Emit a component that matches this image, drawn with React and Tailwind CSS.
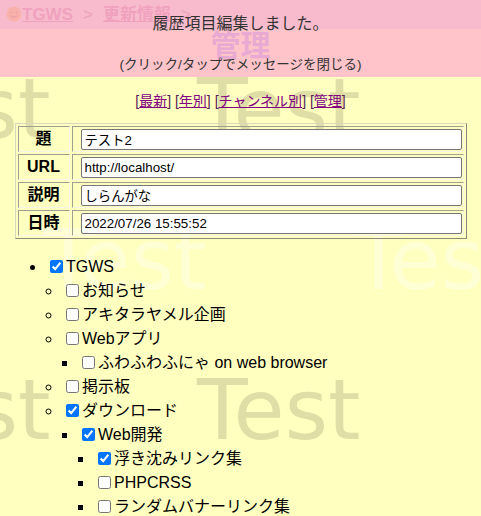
import React, { useState } from 'react';

const font = "font-['Liberation_Sans','Noto_Sans_CJK_JP',sans-serif]";

const tree = [
  {
    label: 'TGWS',
    checked: true,
    children: [
      { label: 'お知らせ' },
      { label: 'アキタラヤメル企画' },
      { label: 'Webアプリ', children: [{ label: 'ふわふわふにゃ on web browser' }] },
      { label: '掲示板' },
      {
        label: 'ダウンロード',
        checked: true,
        children: [
          {
            label: 'Web開発',
            checked: true,
            children: [
              { label: '浮き沈みリンク集', checked: true },
              { label: 'PHPCRSS' },
              { label: 'ランダムバナーリンク集' },
            ],
          },
        ],
      },
    ],
  },
];

const listStyles = ['list-disc pl-[46px]', 'list-[circle] pl-4', 'list-[square] pl-4', 'list-[square] pl-4'];

const Tree = ({ items, depth = 0 }) => (
  <ul className={listStyles[depth]}>
    {items.map((item) => (
      <li key={item.label} className="leading-6">
        <label className="block h-6 whitespace-nowrap">
          <input
            type="checkbox"
            defaultChecked={item.checked}
            className="ml-1 mr-[3px] w-[13px] h-[13px] align-[-1px]"
          />
          {item.label}
        </label>
        {item.children && <Tree items={item.children} depth={depth + 1} />}
      </li>
    ))}
  </ul>
);

const Face = () => (
  <svg width="16" height="16" viewBox="0 0 16 16" className="inline-block align-[-2px]">
    <circle cx="8" cy="8" r="7.5" fill="#e0a030" />
    <circle cx="5.5" cy="6.5" r="1" fill="#a05a10" />
    <circle cx="10.5" cy="6.5" r="1" fill="#a05a10" />
    <path d="M4.5 9.5 Q8 13 11.5 9.5" stroke="#a05a10" strokeWidth="1.2" fill="none" />
  </svg>
);

const fields = [
  { name: '題', value: 'テスト2' },
  { name: 'URL', value: 'http://localhost/' },
  { name: '説明', value: 'しらんがな' },
  { name: '日時', value: '2022/07/26 15:55:52' },
];

export default function App() {
  const [showMessage, setShowMessage] = useState(true);

  return (
    <div className={`relative min-h-[516px] overflow-hidden bg-[#ffffc0] text-black ${font}`}>
      {/* background watermark */}
      <div className="absolute inset-0 pointer-events-none font-['DejaVu_Sans',sans-serif] text-[83px] leading-none whitespace-nowrap">
        <span className="absolute left-[-113px] top-[68px] text-[#dfdea6]">Test</span>
        <span className="absolute left-[197px] top-[68px] text-[#dfdea6]">Test</span>
        <span className="absolute left-[43px] top-[219px] text-[#ffffd6]">Test</span>
        <span className="absolute left-[353px] top-[219px] text-[#ffffd6]">Test</span>
        <span className="absolute left-[-113px] top-[369px] text-[#dfdea6]">Test</span>
        <span className="absolute left-[197px] top-[369px] text-[#dfdea6]">Test</span>
      </div>

      <div className="relative">
        <div className="h-[29px] bg-[#dcd3d4] pl-[6px] flex items-center gap-[2px] text-[17px] font-bold">
          <a href="#" className="underline text-[#b0508e]">
            <Face />TGWS
          </a>
          <span className="mx-[8px] text-[#a07090]">&gt;</span>
          <a href="#" className="underline text-[#b0508e]">更新情報</a>
          <span className="mx-[8px] text-[#a07090]">&gt;</span>
        </div>

        <h1 className="text-center text-[30px] font-bold leading-[34px] text-[#8c7cf0]">管理</h1>

        <p className="mt-[26px] mb-[10px] text-center text-[14px] leading-6 text-[#552255]">
          [<a href="#" className="underline text-[#800080]">最新</a>]{' '}
          [<a href="#" className="underline text-[#800080]">年別</a>]{' '}
          [<a href="#" className="underline text-[#800080]">チャンネル別</a>]{' '}
          [<a href="#" className="underline text-[#800080]">管理</a>]
        </p>

        <table className="w-[452px] mx-auto border-separate border-spacing-[2px] border border-t-[#d8d8c0] border-l-[#d8d8c0] border-r-[#8a8a7a] border-b-[#8a8a7a]">
          <tbody>
            {fields.map((f) => (
              <tr key={f.name}>
                <th className="w-[52px] py-px text-[16px] leading-[22px] font-bold text-center border border-t-[#a0a090] border-l-[#a0a090] border-r-[#f4f4e8] border-b-[#f4f4e8]">
                  {f.name}
                </th>
                <td className="pt-[2px] pb-px pl-2 pr-px border border-t-[#a0a090] border-l-[#a0a090] border-r-[#f4f4e8] border-b-[#f4f4e8]">
                  <input
                    type="text"
                    defaultValue={f.value}
                    className={`block w-full h-[21px] px-[3px] bg-white border border-[#767676] rounded-[2px] text-[13.33px] text-black ${font}`}
                  />
                </td>
              </tr>
            ))}
          </tbody>
        </table>

        <div className="mt-4 text-[16px]">
          <Tree items={tree} />
        </div>
      </div>

      {showMessage && (
        <div
          onClick={() => setShowMessage(false)}
          className="absolute top-0 inset-x-0 h-[77px] bg-[rgba(255,181,202,0.8)] text-center text-[#333] cursor-pointer"
        >
          <p className="pt-[14px] text-[16px] leading-5">履歴項目編集しました。</p>
          <p className="mt-[21px] text-[13.5px] leading-5">(クリック/タップでメッセージを閉じる)</p>
        </div>
      )}
    </div>
  );
}
